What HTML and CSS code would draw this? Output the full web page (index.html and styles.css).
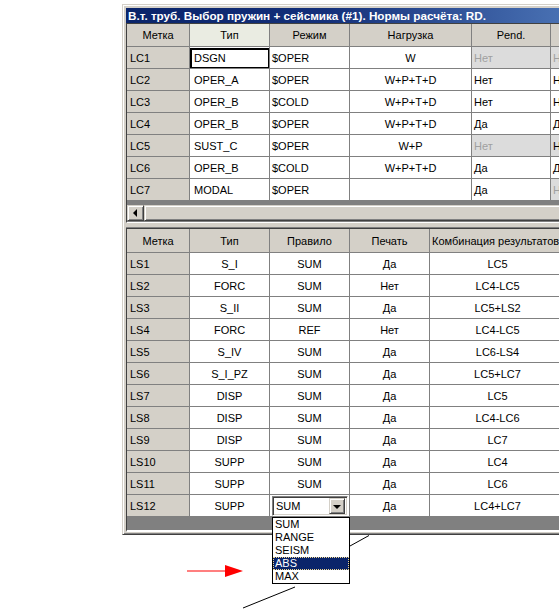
FILE: index.html
```html
<!DOCTYPE html>
<html>
<head>
<meta charset="utf-8">
<link rel="stylesheet" href="styles.css">
</head>
<body>
<div class="window">
  <div class="titlebar">В.т. труб. Выбор пружин + сейсмика (#1). Нормы расчёта: RD.</div>

  <div class="panel panel-top">
    <div class="row head g1">
      <div class="c c1 ctr">Метка</div><div class="c c2 ctr cur">Тип</div><div class="c c3 ctr">Режим</div><div class="c c4 ctr">Нагрузка</div><div class="c c5 ctr">Pend.</div><div class="c c6"></div>
    </div>
    <div class="row g1">
      <div class="c c1 lab">LC1</div><div class="c c2 tl focus">DSGN</div><div class="c c3 rl">$OPER</div><div class="c c4 ctr">W</div><div class="c c5 pl dis">Нет</div><div class="c c6 pl dis">Нет</div>
    </div>
    <div class="row g1">
      <div class="c c1 lab">LC2</div><div class="c c2 tl">OPER_A</div><div class="c c3 rl">$OPER</div><div class="c c4 ctr">W+P+T+D</div><div class="c c5 pl">Нет</div><div class="c c6 pl">Нет</div>
    </div>
    <div class="row g1">
      <div class="c c1 lab">LC3</div><div class="c c2 tl">OPER_B</div><div class="c c3 rl">$COLD</div><div class="c c4 ctr">W+P+T+D</div><div class="c c5 pl">Нет</div><div class="c c6 pl">Нет</div>
    </div>
    <div class="row g1">
      <div class="c c1 lab">LC4</div><div class="c c2 tl">OPER_B</div><div class="c c3 rl">$OPER</div><div class="c c4 ctr">W+P+T+D</div><div class="c c5 pl">Да</div><div class="c c6 pl">Да</div>
    </div>
    <div class="row g1">
      <div class="c c1 lab">LC5</div><div class="c c2 tl">SUST_C</div><div class="c c3 rl">$OPER</div><div class="c c4 ctr">W+P</div><div class="c c5 pl dis">Нет</div><div class="c c6 pl gbg">Нет</div>
    </div>
    <div class="row g1">
      <div class="c c1 lab">LC6</div><div class="c c2 tl">OPER_B</div><div class="c c3 rl">$COLD</div><div class="c c4 ctr">W+P+T+D</div><div class="c c5 pl">Да</div><div class="c c6 pl">Да</div>
    </div>
    <div class="row g1">
      <div class="c c1 lab">LC7</div><div class="c c2 tl">MODAL</div><div class="c c3 rl">$OPER</div><div class="c c4 ctr"></div><div class="c c5 pl">Да</div><div class="c c6 pl dis">Нет</div>
    </div>
    <div class="band band-top"></div>
    <div class="hscroll">
      <div class="sbtn"><span class="tri-left"></span></div>
      <div class="thumb"></div>
    </div>
  </div>

  <div class="splitter"></div>

  <div class="panel panel-bottom">
    <div class="row head g2">
      <div class="c c1 ctr">Метка</div><div class="c c2 ctr">Тип</div><div class="c c3 ctr">Правило</div><div class="c c4 ctr">Печать</div><div class="c c5 hl">Комбинация результатов</div>
    </div>
    <div class="row g2"><div class="c c1 lab">LS1</div><div class="c c2 ctr">S_I</div><div class="c c3 ctr">SUM</div><div class="c c4 ctr">Да</div><div class="c c5 cc">LC5</div></div>
    <div class="row g2"><div class="c c1 lab">LS2</div><div class="c c2 ctr">FORC</div><div class="c c3 ctr">SUM</div><div class="c c4 ctr">Нет</div><div class="c c5 cc">LC4-LC5</div></div>
    <div class="row g2"><div class="c c1 lab">LS3</div><div class="c c2 ctr">S_II</div><div class="c c3 ctr">SUM</div><div class="c c4 ctr">Да</div><div class="c c5 cc">LC5+LS2</div></div>
    <div class="row g2"><div class="c c1 lab">LS4</div><div class="c c2 ctr">FORC</div><div class="c c3 ctr">REF</div><div class="c c4 ctr">Нет</div><div class="c c5 cc">LC4-LC5</div></div>
    <div class="row g2"><div class="c c1 lab">LS5</div><div class="c c2 ctr">S_IV</div><div class="c c3 ctr">SUM</div><div class="c c4 ctr">Да</div><div class="c c5 cc">LC6-LS4</div></div>
    <div class="row g2"><div class="c c1 lab">LS6</div><div class="c c2 ctr">S_I_PZ</div><div class="c c3 ctr">SUM</div><div class="c c4 ctr">Да</div><div class="c c5 cc">LC5+LC7</div></div>
    <div class="row g2"><div class="c c1 lab">LS7</div><div class="c c2 ctr">DISP</div><div class="c c3 ctr">SUM</div><div class="c c4 ctr">Да</div><div class="c c5 cc">LC5</div></div>
    <div class="row g2"><div class="c c1 lab">LS8</div><div class="c c2 ctr">DISP</div><div class="c c3 ctr">SUM</div><div class="c c4 ctr">Да</div><div class="c c5 cc">LC4-LC6</div></div>
    <div class="row g2"><div class="c c1 lab">LS9</div><div class="c c2 ctr">DISP</div><div class="c c3 ctr">SUM</div><div class="c c4 ctr">Да</div><div class="c c5 cc">LC7</div></div>
    <div class="row g2"><div class="c c1 lab">LS10</div><div class="c c2 ctr">SUPP</div><div class="c c3 ctr">SUM</div><div class="c c4 ctr">Да</div><div class="c c5 cc">LC4</div></div>
    <div class="row g2"><div class="c c1 lab">LS11</div><div class="c c2 ctr">SUPP</div><div class="c c3 ctr">SUM</div><div class="c c4 ctr">Да</div><div class="c c5 cc">LC6</div></div>
    <div class="row g2">
      <div class="c c1 lab">LS12</div><div class="c c2 ctr">SUPP</div>
      <div class="c c3 combo-cell">
        <div class="combo"><span class="combo-text">SUM</span><span class="combo-btn"><span class="tri-down"></span></span></div>
        <div class="droplist">
          <div class="opt">SUM</div>
          <div class="opt">RANGE</div>
          <div class="opt">SEISM</div>
          <div class="opt sel">ABS</div>
          <div class="opt">MAX</div>
        </div>
      </div>
      <div class="c c4 ctr">Да</div><div class="c c5 cc">LC4+LC7</div>
    </div>
    <div class="band band-bottom"></div>
  </div>
</div>

<svg class="annot" width="559" height="609" viewBox="0 0 559 609">
  <line x1="243" y1="608" x2="295" y2="587" stroke="#000" stroke-width="1"/>
  <line x1="350" y1="546" x2="369" y2="535.5" stroke="#000" stroke-width="1"/>
  <line x1="187" y1="571" x2="228" y2="571" stroke="#ff0000" stroke-width="1.2"/>
  <polygon points="225,565 243,571 225,577" fill="#ff0000"/>
</svg>
</body>
</html>
```

FILE: styles.css
```css
html, body {
  margin: 0;
  padding: 0;
  background: #fff;
  overflow: hidden;
}
body {
  width: 559px;
  height: 609px;
  position: relative;
  font-family: "Liberation Sans", Arial, sans-serif;
  font-size: 11px;
  color: #000;
}

.window {
  margin: 4px 0 0 122px;
  width: 470px;
  height: 531px;
  box-sizing: border-box;
  background: #d4d0c8;
  border-top: 1px solid #d4d0c8;
  border-left: 1px solid #d4d0c8;
  border-right: 1px solid #404040;
  border-bottom: 1px solid #404040;
  box-shadow: inset 1px 1px 0 #fff, inset -1px -1px 0 #808080;
  padding: 3px;
}

.titlebar {
  height: 15px;
  line-height: 15px;
  padding-left: 2px;
  color: #fff;
  font-weight: bold;
  font-size: 11.7px;
  white-space: nowrap;
  overflow: hidden;
  background: linear-gradient(to right, #0a246a 0px, #14307a 200px, #4a72b4 440px);
}

.panel {
  border-top: 1px solid #404040;
  border-left: 1px solid #404040;
  background: #808080;
}
.panel-top {
  height: 198px;
  border-bottom: 1px solid #fff;
  overflow: hidden;
}
.panel-bottom {
  height: 301px;
  border-bottom: 2px solid #fff;
  position: relative;
}

.splitter {
  height: 5px;
  box-sizing: border-box;
  border-bottom: 1px solid #808080;
  background: #d4d0c8;
}

.row {
  display: flex;
  height: 22px;
  white-space: nowrap;
}
.row.head { height: 23px; }
.row.head.g2 { height: 24px; }

.c {
  flex: none;
  box-sizing: border-box;
  border-right: 1px solid #808080;
  border-bottom: 1px solid #808080;
  background: #fff;
  display: flex;
  align-items: center;
  overflow: hidden;
  white-space: nowrap;
}
.head .c { background: #d4d0c8; }
.head .c.cur { background: #eaece2; }

.g1 .c1 { width: 63px; }
.g1 .c2 { width: 80px; }
.g1 .c3 { width: 80px; }
.g1 .c4 { width: 122px; }
.g1 .c5 { width: 79px; }
.g1 .c6 { width: 80px; }

.g2 .c1 { width: 63px; }
.g2 .c2 { width: 80px; }
.g2 .c3 { width: 80px; }
.g2 .c4 { width: 80px; }
.g2 .c5 { width: 136px; }

.ctr { justify-content: center; }
.cc { justify-content: center; }
.hl { justify-content: flex-start; padding-left: 2px; }
.lab { background: #d4d0c8 !important; padding-left: 3px; }
.tl { padding-left: 4px; }
.rl { padding-left: 2px; }
.pl { padding-left: 2px; }

.focus { position: relative; }
.focus::after {
  content: "";
  position: absolute;
  top: 1px;
  left: 0;
  right: -1px;
  bottom: -1px;
  border: 2px solid #000;
}

.dis { background: #dcdcdc; color: #a0a0a0; }
.gbg { background: #dcdcdc; }

.band-top { height: 4px; }
.band-bottom { height: 13px; }

.hscroll {
  display: flex;
  height: 16px;
  background: #d4d0c8;
}
.sbtn, .thumb {
  box-sizing: border-box;
  background: #d4d0c8;
  border-top: 1px solid #d4d0c8;
  border-left: 1px solid #d4d0c8;
  border-right: 1px solid #404040;
  border-bottom: 1px solid #404040;
  box-shadow: inset 1px 1px 0 #fff, inset -1px -1px 0 #808080;
}
.sbtn {
  width: 17px;
  flex: none;
  display: flex;
  align-items: center;
  justify-content: center;
}
.thumb { flex: 1; }
.tri-left {
  width: 0;
  height: 0;
  border-top: 4px solid transparent;
  border-bottom: 4px solid transparent;
  border-right: 4px solid #000;
  margin-right: 1px;
}

.combo-cell {
  position: relative;
  align-items: flex-start;
  overflow: visible;
  z-index: 2;
}
.combo {
  margin: 1px 0 0 2px;
  width: 76px;
  height: 20px;
  box-sizing: border-box;
  background: #fff;
  border-top: 1px solid #808080;
  border-left: 1px solid #808080;
  border-right: 1px solid #fff;
  border-bottom: 1px solid #fff;
  box-shadow: inset 1px 1px 0 #404040, inset -1px -1px 0 #d4d0c8;
  display: flex;
  align-items: center;
  padding: 2px 2px 2px 3px;
}
.combo-text { flex: 1; font-size: 11px; }
.combo-btn {
  width: 16px;
  height: 16px;
  box-sizing: border-box;
  background: #d4d0c8;
  border-top: 1px solid #d4d0c8;
  border-left: 1px solid #d4d0c8;
  border-right: 1px solid #404040;
  border-bottom: 1px solid #404040;
  box-shadow: inset 1px 1px 0 #fff, inset -1px -1px 0 #808080;
  display: flex;
  align-items: center;
  justify-content: center;
}
.tri-down {
  width: 0;
  height: 0;
  border-left: 4px solid transparent;
  border-right: 4px solid transparent;
  border-top: 4px solid #000;
  margin-top: 1px;
}

.droplist {
  position: absolute;
  top: 22px;
  left: 2px;
  width: 78px;
  box-sizing: border-box;
  background: #fff;
  border: 1px solid #000;
  z-index: 3;
}
.opt {
  height: 13px;
  line-height: 13px;
  padding-left: 2px;
  font-size: 11px;
  box-sizing: border-box;
}
.opt.sel {
  background: #0a246a;
  color: #fff;
  outline: 1px dotted #f0d890;
  outline-offset: -1px;
}

.annot {
  position: absolute;
  left: 0;
  top: 0;
  pointer-events: none;
}
```
